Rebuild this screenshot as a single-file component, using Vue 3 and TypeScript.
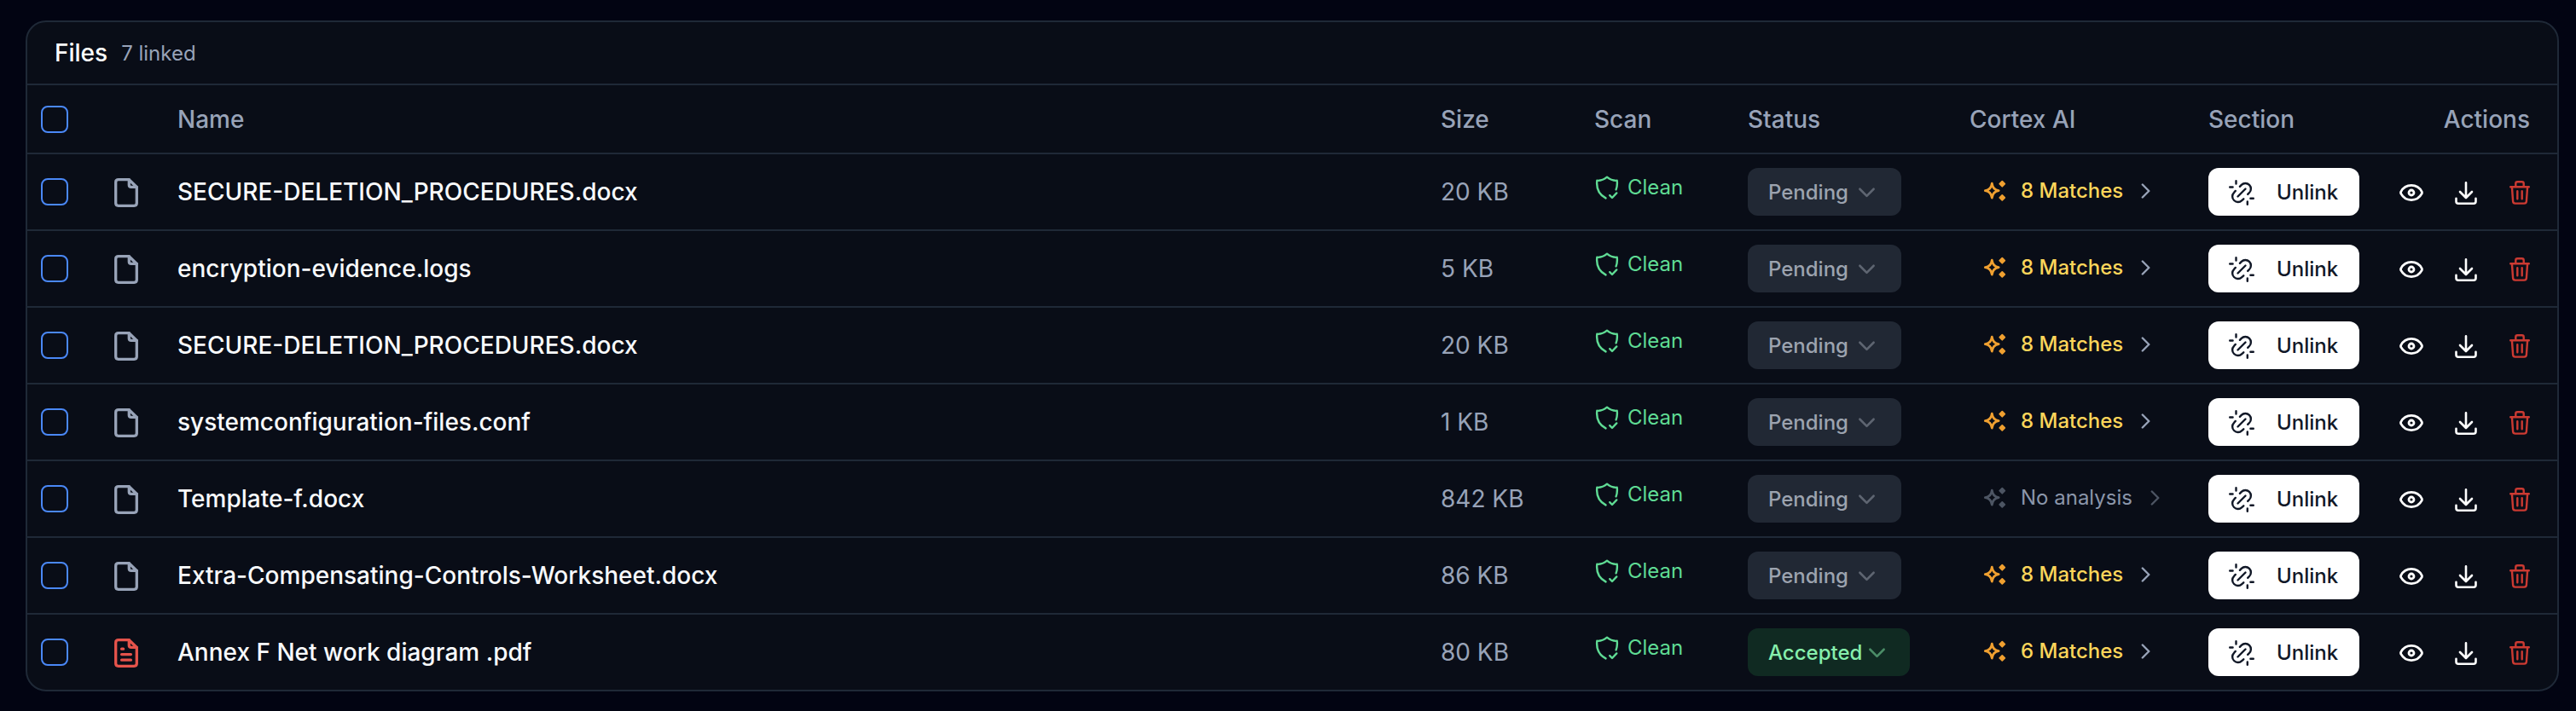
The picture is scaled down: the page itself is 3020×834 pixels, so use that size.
<script setup lang="ts">
interface FileRow {
  name: string
  size: string
  status: 'Pending' | 'Accepted'
  matches: number
  pdf?: boolean
}

const files: FileRow[] = [
  { name: 'SECURE-DELETION_PROCEDURES.docx', size: '20 KB', status: 'Pending', matches: 8 },
  { name: 'encryption-evidence.logs', size: '5 KB', status: 'Pending', matches: 8 },
  { name: 'SECURE-DELETION_PROCEDURES.docx', size: '20 KB', status: 'Pending', matches: 8 },
  { name: 'systemconfiguration-files.conf', size: '1 KB', status: 'Pending', matches: 8 },
  { name: 'Template-f.docx', size: '842 KB', status: 'Pending', matches: 0 },
  { name: 'Extra-Compensating-Controls-Worksheet.docx', size: '86 KB', status: 'Pending', matches: 8 },
  { name: 'Annex F Net work diagram .pdf', size: '80 KB', status: 'Accepted', matches: 6, pdf: true },
]
</script>

<template>
  <main class="page">
    <section class="card">
      <header class="title-bar">
        <h2>Files</h2>
        <span class="count">{{ files.length }} linked</span>
      </header>

      <div class="row head">
        <span class="check"></span>
        <span></span>
        <span>Name</span>
        <span>Size</span>
        <span>Scan</span>
        <span>Status</span>
        <span>Cortex AI</span>
        <span>Section</span>
        <span class="actions-title">Actions</span>
      </div>

      <div v-for="(file, i) in files" :key="i" class="row">
        <span class="check"></span>
        <svg class="file-icon" :class="{ pdf: file.pdf }" viewBox="0 0 28 34">
          <path d="M5 1.7H17.3L26.3 10.5V29.3Q26.3 32.3 23.3 32.3H4.7Q1.7 32.3 1.7 29.3V4.7Q1.7 1.7 5 1.7Z" />
          <path d="M17.3 1.7V8Q17.3 10.3 19.8 10.3H26.3" />
          <path v-if="file.pdf" d="M8.6 12.2H10.6M8.6 18.6H19.4M8.6 25.2H19.4" />
        </svg>
        <span class="name">{{ file.name }}</span>
        <span class="size">{{ file.size }}</span>
        <span class="scan">
          <svg class="shield" viewBox="0 0 28 28">
            <path d="M12.5 26.4C5.3 22.6 1.2 15.7 2.3 5.8C6.3 6.1 10.4 4.7 14 1.7C17.6 4.7 21.7 6.1 25.7 5.8C26.2 9.9 25.8 13.3 24.6 16.4" />
            <path d="M17.2 23.2L20 26L25.3 20.4" />
          </svg>
          Clean
        </span>
        <span>
          <button class="status" :class="{ accepted: file.status === 'Accepted' }">
            {{ file.status }}
            <svg class="chev-down" viewBox="0 0 20 12"><path d="M1.5 1.5L10 10L18.5 1.5" /></svg>
          </button>
        </span>
        <span class="cortex" :class="{ none: !file.matches }">
          <svg class="sparkles" viewBox="0 0 26 26">
            <path class="star" d="M9.3 4.2C10 9.3 12.2 11.9 17.2 12.6C12.2 13.3 10 15.9 9.3 21C8.6 15.9 6.4 13.3 1.4 12.6C6.4 11.9 8.6 9.3 9.3 4.2Z" />
            <path class="dot" d="M21.3 1.7L24.3 4.7L21.3 7.7L18.3 4.7ZM21.3 17.9L24.3 20.9L21.3 23.9L18.3 20.9Z" />
          </svg>
          <span>{{ file.matches ? `${file.matches} Matches` : 'No analysis' }}</span>
          <svg class="chev-right" viewBox="0 0 12 18"><path d="M1.8 1.5L9.3 9L1.8 16.5" /></svg>
        </span>
        <span>
          <button class="unlink">
            <svg viewBox="0 0 30 30">
              <path d="M10.5 19.5L19.5 10.5" />
              <path d="M12.9 7.8L14.8 5.8C17.3 3.3 21.4 3.3 24 5.8C26.5 8.4 26.5 12.5 24 15L22.2 16.9" />
              <path d="M7.8 12.9L6.1 14.8C3.5 17.4 3.5 21.5 6.1 24C8.7 26.6 12.7 26.6 15.3 24.1L17.3 22.3" />
              <path d="M8.5 1.2V4.6M1.2 8.5H4.6M21.8 25.4V28.8M25.4 21.8H28.8" />
            </svg>
            Unlink
          </button>
        </span>
        <span class="actions">
          <svg class="eye" viewBox="0 0 28 20">
            <path d="M1.8 11.2Q1.3 10 1.8 8.8C4.3 4.2 8.8 1.4 14 1.4S23.7 4.2 26.2 8.8Q26.7 10 26.2 11.2C23.7 15.8 19.2 18.6 14 18.6S4.3 15.8 1.8 11.2Z" />
            <circle cx="14" cy="10" r="3" />
          </svg>
          <svg class="download" viewBox="0 0 26 27">
            <path d="M13 1.3V18.8M6 12L13 19L20 12M1.5 19.8V23.2Q1.5 25.7 4 25.7H22Q24.5 25.7 24.5 23.2V19.8" />
          </svg>
          <svg class="trash" viewBox="0 0 24 28">
            <path d="M1.2 7.2H22.8M7.3 7V3.4Q7.3 1.3 9.4 1.3H14.6Q16.7 1.3 16.7 3.4V7M2.9 7.2L4.1 24.2Q4.3 26.6 6.7 26.6H17.3Q19.7 26.6 19.9 24.2L21.1 7.2M9.3 12.2V21.2M14.7 12.2V21.2" />
          </svg>
        </span>
      </div>
    </section>
  </main>
</template>

<style>
body {
  background: #020412;
}
</style>

<style scoped>
.page {
  box-sizing: border-box;
  height: 834px;
  padding: 24px 20px 23px 30px;
  background: #020412;
  font-family: Inter, sans-serif;
  font-size: 28px;
  color: #98a3b8;
}
.card {
  box-sizing: border-box;
  height: 787px;
  border: 2px solid #1f2937;
  border-radius: 24px;
  background: #090d17;
}
.title-bar {
  box-sizing: border-box;
  height: 72px;
  padding: 0 32px;
  display: flex;
  align-items: center;
  gap: 16px;
}
h2 {
  margin: 0;
  font-size: 28px;
  font-weight: 500;
  color: #fff;
}
.count {
  font-size: 24px;
}
.row {
  box-sizing: border-box;
  height: 90px;
  border-top: 2px solid #1f2937;
  display: grid;
  grid-template-columns: 86px 90px 1481px 180px 180px 260px 280px 196px 1fr;
  align-items: center;
  padding: 0 16px 0 0;
}
.head {
  height: 81px;
  font-weight: 500;
}
.check {
  box-sizing: border-box;
  width: 32px;
  height: 32px;
  margin-left: 16px;
  border: 2px solid #4a88f7;
  border-radius: 8px;
}
svg {
  display: block;
  flex: none;
  fill: none;
  stroke: currentColor;
  stroke-width: 2.4;
  stroke-linecap: round;
  stroke-linejoin: round;
}
.file-icon {
  width: 28px;
  height: 34px;
  margin: 2px 0 0 16px;
  stroke-width: 3.3;
}
.file-icon.pdf {
  color: #e5534b;
}
.name {
  font-weight: 500;
  color: #f8fafc;
  white-space: pre;
}
.scan {
  display: flex;
  align-items: center;
  gap: 10px;
  height: 30px;
  margin-bottom: 11px;
  padding-left: 1px;
  font-size: 24px;
  color: #5fdb94;
}
.shield {
  width: 28px;
  height: 28px;
}
button {
  box-sizing: border-box;
  height: 56px;
  border: 0;
  font: 500 24px Inter, sans-serif;
  display: flex;
  align-items: center;
}
.status {
  padding: 0 31px 0 24px;
  gap: 12px;
  border-radius: 12px;
  background: #212834;
  color: #9ca3af;
  width: 180px;
}
.status.accepted {
  width: 190px;
  gap: 8px;
  background: #102a22;
  color: #86efac;
}
.chev-down {
  width: 19px;
  height: 12px;
  margin-top: 2px;
  stroke-width: 2.7;
  opacity: 0.5;
}
.cortex {
  display: flex;
  align-items: center;
  padding-left: 17px;
  margin-bottom: 3px;
  font-size: 24px;
  font-weight: 500;
  color: #fcd55a;
}
.sparkles {
  width: 26px;
  height: 26px;
  margin-right: 17px;
  color: #f0a030;
}
.star {
  stroke-width: 2.8;
}
.dot {
  fill: currentColor;
  stroke-width: 1.8;
}
.chev-right {
  width: 12px;
  height: 18px;
  margin-left: 21px;
  color: #98a3b8;
}
.cortex.none {
  font-weight: 400;
  color: #8b96aa;
}
.none .sparkles,
.none .chev-right {
  color: #4d5563;
}
.unlink {
  width: 177px;
  padding: 0 24px;
  gap: 26px;
  border-radius: 12px;
  background: #fff;
  color: #111827;
}
.unlink svg {
  width: 30px;
  height: 30px;
  margin-top: 2px;
}
.actions {
  display: flex;
  align-items: center;
  padding-left: 28px;
  padding-top: 2px;
  color: #fff;
}
.actions-title {
  text-align: right;
  padding-right: 16px;
}
.eye {
  width: 28px;
  height: 20px;
  stroke-width: 2.8;
}
.download {
  width: 26px;
  height: 27px;
  margin-left: 37px;
  margin-top: 1px;
  stroke-width: 2.6;
}
.trash {
  width: 24px;
  height: 28px;
  margin-left: 38px;
  color: #cb3a32;
}
</style>
